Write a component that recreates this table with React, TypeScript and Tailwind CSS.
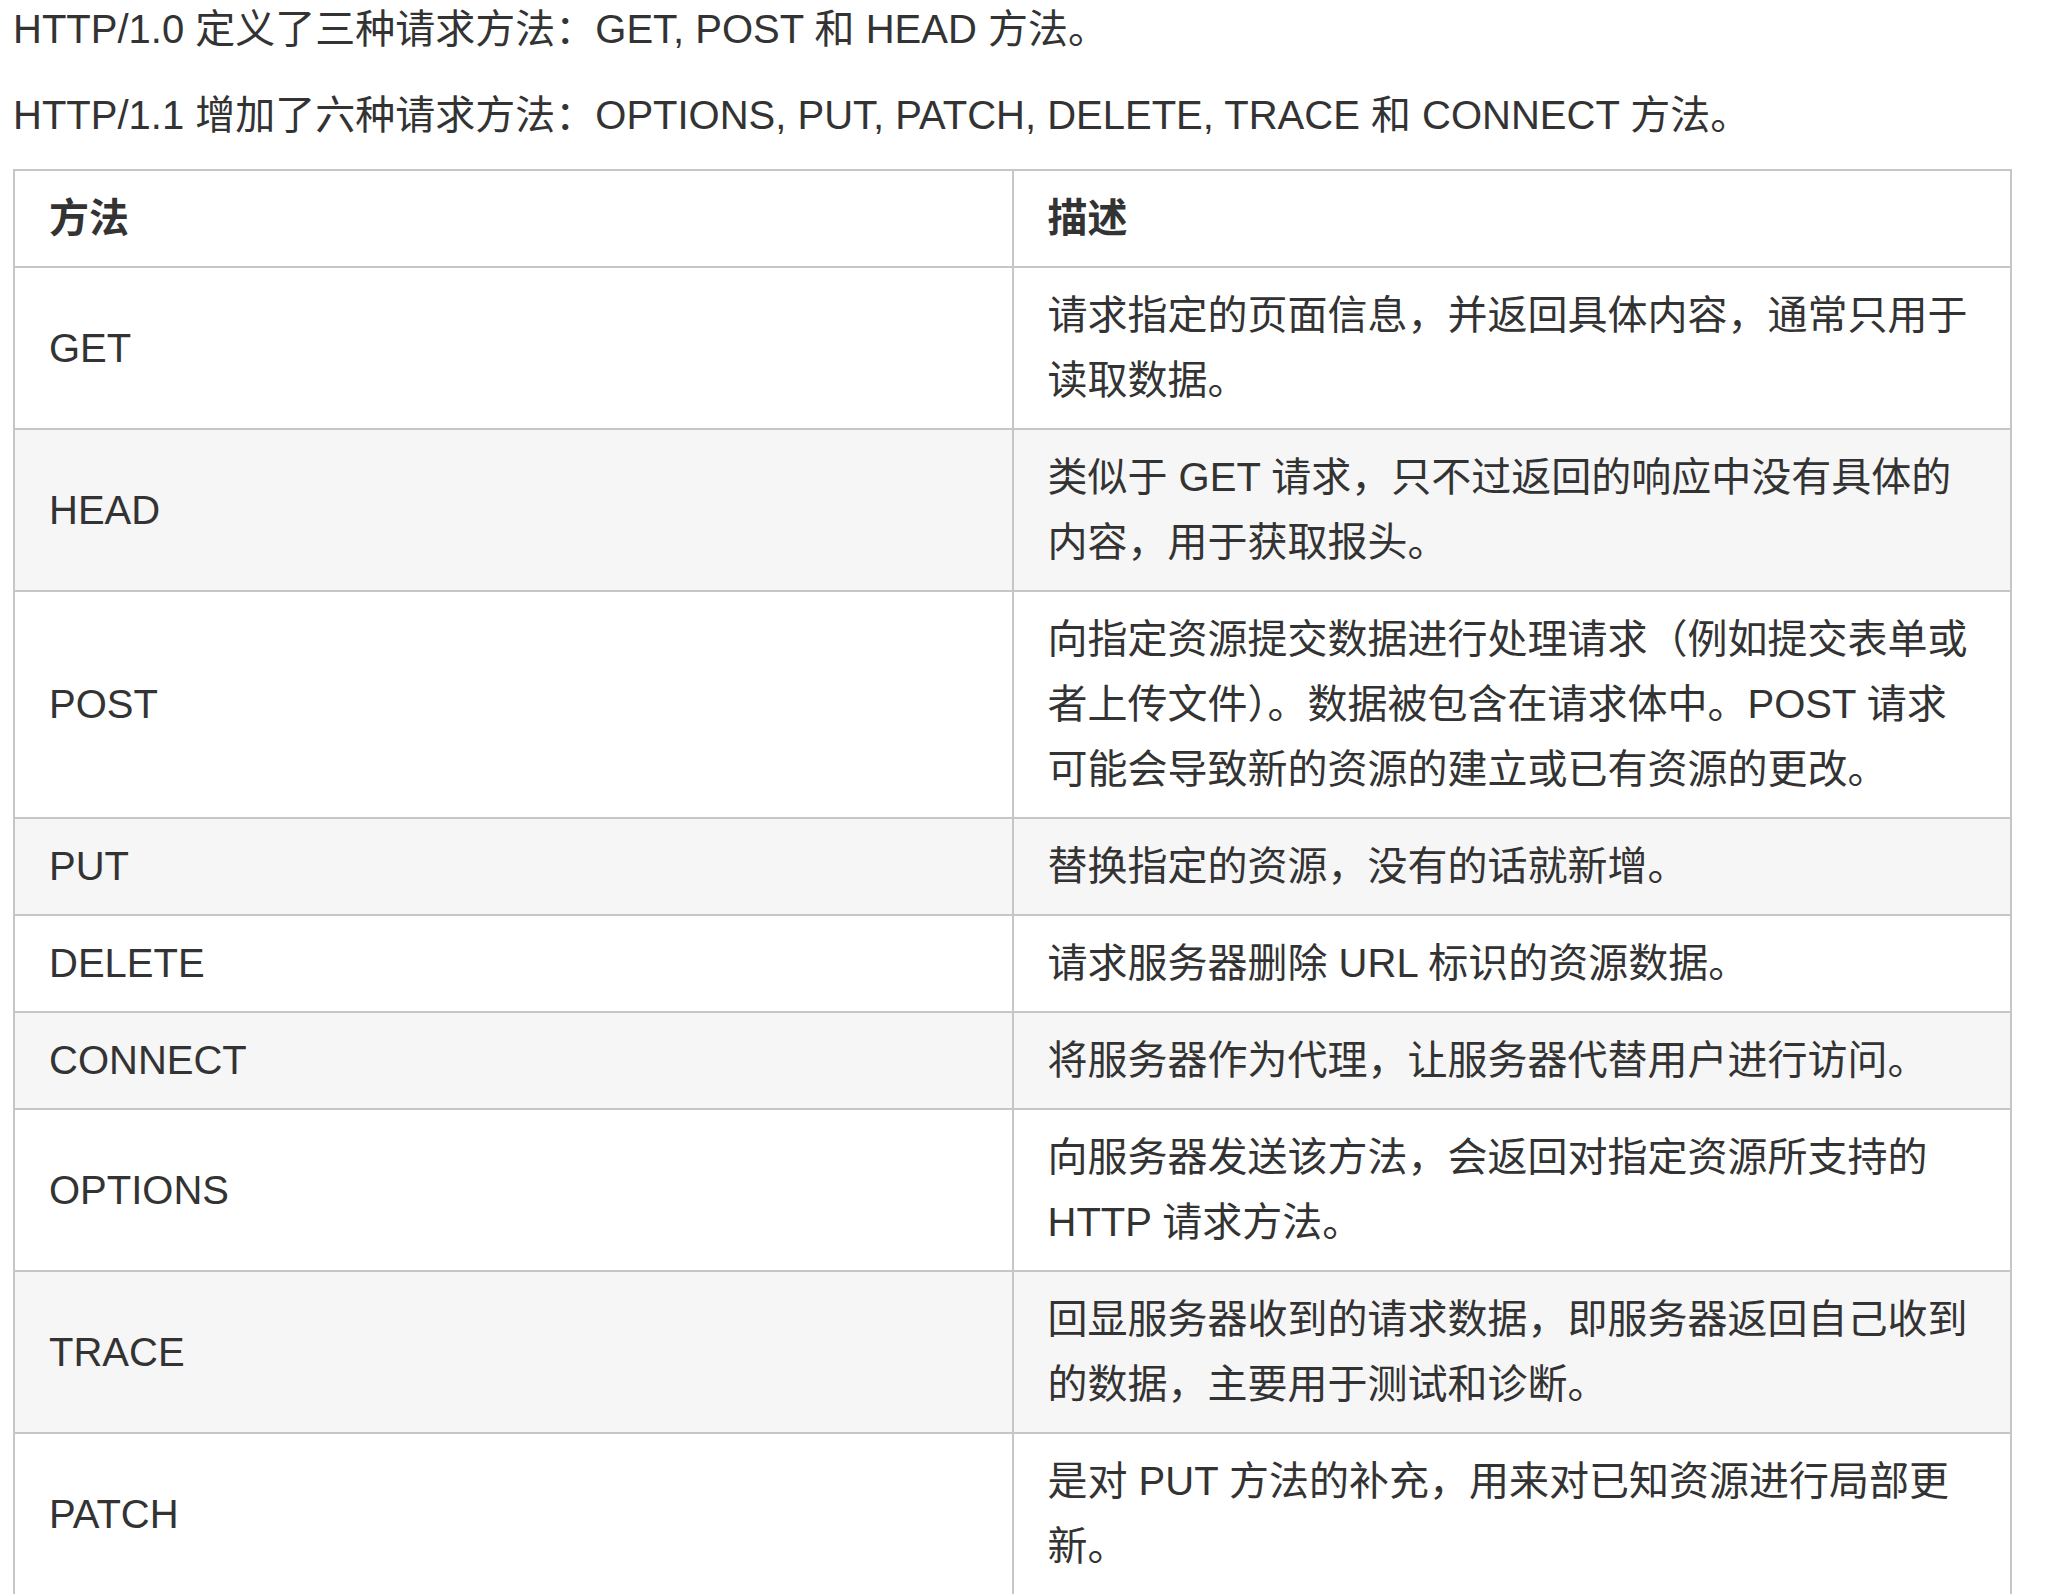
import React from 'react'

const ROWS = [
  { method: 'GET', desc: '请求指定的页面信息，并返回具体内容，通常只用于读取数据。' },
  { method: 'HEAD', desc: '类似于 GET 请求，只不过返回的响应中没有具体的内容，用于获取报头。' },
  {
    method: 'POST',
    desc: '向指定资源提交数据进行处理请求（例如提交表单或者上传文件）。数据被包含在请求体中。POST 请求可能会导致新的资源的建立或已有资源的更改。',
  },
  { method: 'PUT', desc: '替换指定的资源，没有的话就新增。' },
  { method: 'DELETE', desc: '请求服务器删除 URL 标识的资源数据。' },
  { method: 'CONNECT', desc: '将服务器作为代理，让服务器代替用户进行访问。' },
  { method: 'OPTIONS', desc: '向服务器发送该方法，会返回对指定资源所支持的 HTTP 请求方法。' },
  { method: 'TRACE', desc: '回显服务器收到的请求数据，即服务器返回自己收到的数据，主要用于测试和诊断。' },
  { method: 'PATCH', desc: '是对 PUT 方法的补充，用来对已知资源进行局部更新。' },
]

export default function App() {
  const cell = 'border-2 border-[#c6c6c6] px-[34px] py-[15px] align-middle'

  return (
    <div className="w-[2046px] bg-white pl-[13px] text-[40px] leading-[65px] text-[#333333] font-['Liberation_Sans','Noto_Sans_CJK_SC',sans-serif]">
      <p className="-mt-[3px] mb-[21px]">HTTP/1.0 定义了三种请求方法：GET, POST 和 HEAD 方法。</p>
      <p className="mb-[21px]">
        HTTP/1.1 增加了六种请求方法：OPTIONS, PUT, PATCH, DELETE, TRACE 和 CONNECT 方法。
      </p>
      <table className="w-[1999px] table-fixed border-collapse text-left">
        <thead>
          <tr>
            <th className={`${cell} w-1/2 font-bold`}>方法</th>
            <th className={`${cell} w-1/2 font-bold`}>描述</th>
          </tr>
        </thead>
        <tbody>
          {ROWS.map(({ method, desc }, i) => (
            <tr key={method} className={i % 2 === 1 ? 'bg-[#f6f6f6]' : 'bg-white'}>
              <td className={cell}>{method}</td>
              <td className={cell}>{desc}</td>
            </tr>
          ))}
        </tbody>
      </table>
    </div>
  )
}
